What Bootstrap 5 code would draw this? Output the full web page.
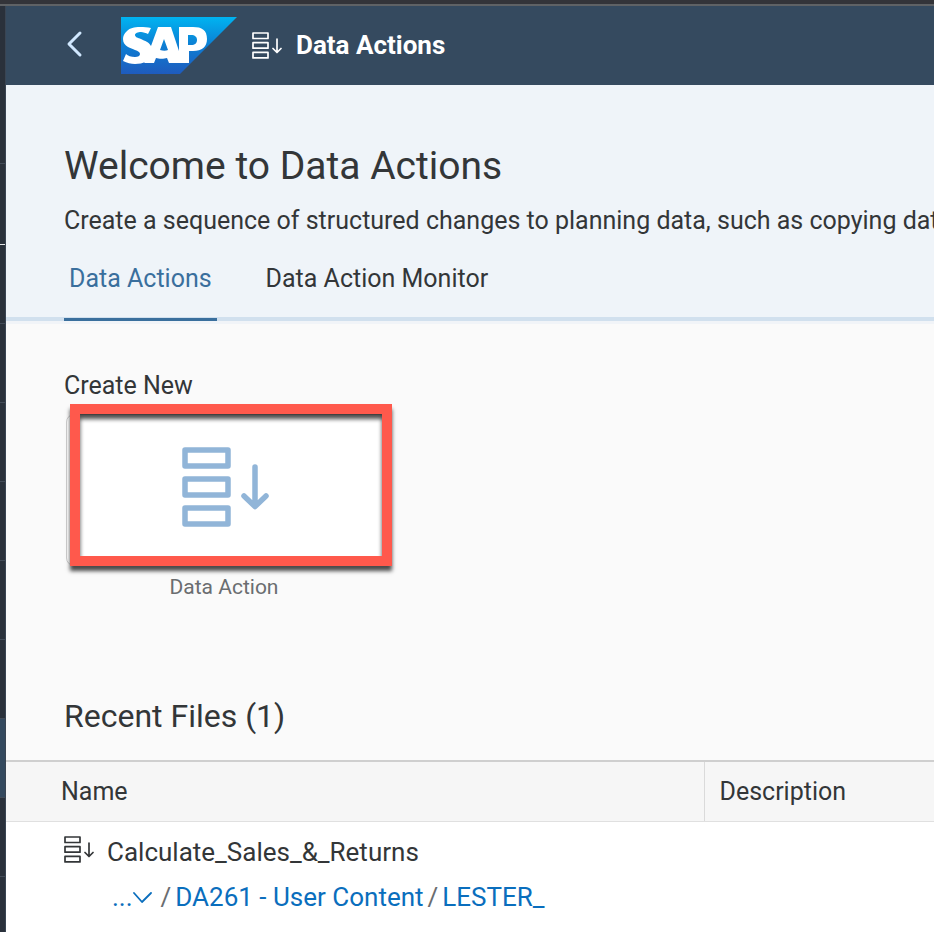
<!DOCTYPE html>
<html lang="en">
<head>
<meta charset="utf-8">
<meta name="viewport" content="width=device-width, initial-scale=1">
<title>Data Actions</title>
<link href="https://cdn.jsdelivr.net/npm/bootstrap@5.3.0/dist/css/bootstrap.min.css" rel="stylesheet">
<style>
  body { font-family: Roboto, "Noto Sans", sans-serif; font-size: 25px; line-height: 32px; color: #333638; background: #fafafa; }
  a { text-decoration: none; }
  .top-strip { height: 6px; background: #333439; border-bottom: 2px solid #5f6265; }
  .side-rail { width: 6px; background: #2a313b; border-right: 1px solid #3a4553; }
  .rail-link { height: 79px; border-bottom: 1px solid #434c58; }
  .rail-link:first-child { border-color: #2a313b; }
  .rail-link.marked { height: 81px; border-color: #e4e6e8; }
  .rail-link.active { background: #34495e; }
  .shell { height: 79px; background: #354a5f; color: #fff; padding-left: 58px; }
  .back-btn { width: 22px; color: #d1e8ff; margin-right: 35px; padding: 0 0 3px; }
  .brand-link { margin-right: 15px; }
  .app-title { font-size: 26px; line-height: 32px; margin-left: 14px; padding-bottom: 2px; }
  .glyph { fill: none; stroke: currentColor; stroke-linecap: round; stroke-linejoin: round; }
  .hero { background: #eff4f9; padding: 59px 0 0 58px; border-bottom: 3px solid #f1f4f8; }
  .hero-title { font-size: 39px; line-height: 44px; }
  .hero-text { margin-top: 17px; }
  .tab-row { margin: 18px 0 0 -58px; padding-left: 58px; border-bottom: 4px solid #d1e0ee; gap: 44px; }
  .tab-row .nav-link { color: #333638; padding: 8px 5px 23px; margin-bottom: -4px; border-bottom: 3px solid transparent; }
  .tab-row .nav-link.active { color: #3a6f9d; border-color: #3a6f9d; }
  .create { padding: 46px 58px 0; }
  .create-title { font-size: 25px; line-height: 32px; }
  .tile { width: 322px; height: 152px; margin: 12px 0 0 2px; background: #fff; border: 1px solid #cdcdcd; border-radius: 8px; color: #91b5d8; padding: 0 2px 6px 0; position: relative; }
  .callout { position: absolute; inset: -11px -5px -1px 3px; border: 10px solid #ff594c; box-shadow: 0 5px 4px rgba(0,0,0,.7), inset 0 5px 4px rgba(0,0,0,.7); }
  .tile-name { width: 320px; font-size: 21px; line-height: 28px; color: #6a6d70; margin-top: 7px; }
  .recent-title { font-size: 32px; line-height: 40px; padding: 0 58px; margin-top: 95px; }
  .files { margin-top: 24px; background: #fff; border-top: 2px solid #cfcfcf; table-layout: fixed; }
  .files th { background: #f6f6f6; font-weight: 400; padding: 14px 15px 13px; border-bottom: 1px solid #e0e0e0; }
  .files th:first-child { width: 698px; padding-left: 55px; border-right: 1px solid #dadada; }
  .files td { padding: 14px 15px 40px 58px; font-size: 26px; }
  .file-link { color: #333638; gap: 13px; }
  .crumbs { margin: 13px 0 0 48px; color: #6a6d70; gap: 4px; }
  .crumbs a { color: #0a6ebd; }
  .crumbs .more-link { margin-right: 4px; }
</style>
</head>
<body>
<svg class="d-none" aria-hidden="true">
  <symbol id="ic-step" viewBox="0 0 30 28">
    <rect x="1" y="1" width="15" height="5.500"/><rect x="1" y="10.700" width="15" height="5.500"/><rect x="1" y="20.400" width="15" height="5.500"/>
    <path d="M25 7v13M21 16.500l4 4 4-4"/>
  </symbol>
</svg>
<div class="min-vh-100 d-flex flex-column overflow-hidden">
  <div class="top-strip"></div>
  <div class="d-flex flex-fill">
    <nav class="side-rail flex-shrink-0 vh-100 overflow-hidden" aria-label="Main">
      <div class="rail-link"></div><div class="rail-link"></div><div class="rail-link marked"></div><div class="rail-link"></div>
      <div class="rail-link"></div><div class="rail-link"></div><div class="rail-link"></div><div class="rail-link"></div>
      <div class="rail-link"></div><div class="rail-link active"></div><div class="rail-link"></div><div class="rail-link"></div>
    </nav>
    <div class="flex-fill overflow-hidden">
      <header class="shell d-flex align-items-center">
        <button class="back-btn btn border-0 d-flex" type="button" aria-label="Back">
          <svg class="glyph" width="20" height="28" viewBox="0 0 20 28" stroke-width="3"><path d="M16 3L5 14l11 11"/></svg>
        </button>
        <a class="brand-link d-flex" href="#" aria-label="SAP home">
          <svg width="116" height="58" viewBox="0 0 116 58">
            <defs><linearGradient id="sapg" x2="0" y2="1"><stop offset="0" stop-color="#00b4f1"/><stop offset=".5" stop-color="#0d7ed3"/><stop offset="1" stop-color="#1f5bbd"/></linearGradient></defs>
            <path fill="url(#sapg)" d="M0 0h116L59 57H0z"/>
            <path fill="#fff" fill-rule="evenodd" d="M58 10v24L50 10H37l-7 19c-2-4-6-5-10-7-3-1-6-2-6-4s3-3 6-3c2 0 5 1 7 2l3-6c-3-1-7-1-11-1-6 0-10 1-13 4-3 3-4 5-4 8 0 4 2 6 5 8 2 1 5 2 7 3 3 1 5 2 5 4s-2 3-5 3c-4 0-7-1-9-3l-3 7c4 2 8 3 12 3 4 0 8-1 10-2l-1 1h10l2-5c3 1 8 1 11 0l2 5h20V34h4c9 0 14-4 14-12 0-9-5-12-14-12zM39 33l4-11 4 11c-2 1-5 1-8 0zM67 18h3c4 0 6 2 6 5s-2 5-6 5h-3z"/>
          </svg>
        </a>
        <svg class="glyph" width="30" height="28" stroke-width="1.700"><use href="#ic-step"/></svg>
        <h1 class="app-title fw-bold mb-0">Data Actions</h1>
      </header>
      <main>
        <section class="hero">
          <h2 class="hero-title fw-normal mb-0">Welcome to Data Actions</h2>
          <p class="hero-text text-nowrap overflow-hidden mb-0">Create a sequence of structured changes to planning data, such as copying data</p>
          <nav class="tab-row nav flex-nowrap text-nowrap">
            <a class="nav-link active" href="#" aria-current="page">Data Actions</a>
            <a class="nav-link" href="#">Data Action Monitor</a>
          </nav>
        </section>
        <section class="create">
          <h3 class="create-title fw-normal mb-0">Create New</h3>
          <button class="tile d-flex align-items-center justify-content-center" type="button" aria-labelledby="tile-name">
            <svg class="glyph" width="88" height="80" viewBox="0 0 88 80" stroke-width="5.500">
              <rect x="3" y="3" width="43" height="16"/><rect x="3" y="32" width="43" height="16"/><rect x="3" y="61" width="43" height="16"/>
              <path d="M73 20v39M62 49l11 10.500 11-10.500"/>
            </svg>
            <span class="callout"></span>
          </button>
          <div class="tile-name text-center" id="tile-name">Data Action</div>
        </section>
        <h3 class="recent-title fw-normal mb-0">Recent Files (1)</h3>
        <table class="files w-100">
          <thead><tr><th scope="col">Name</th><th scope="col">Description</th></tr></thead>
          <tbody><tr>
            <td>
              <a class="file-link d-flex" href="#"><svg class="glyph" width="30" height="28" stroke-width="1.700"><use href="#ic-step"/></svg>Calculate_Sales_&amp;_Returns</a>
              <div class="crumbs d-flex text-nowrap"><a class="more-link" href="#" aria-label="More locations">...<svg class="glyph" width="20" height="16" viewBox="0 0 20 16" stroke-width="1.800"><path d="M1 2l8 9 9-9"/></svg></a><span>/</span><a href="#">DA261 - User Content</a><span>/</span><a href="#">LESTER_</a></div>
            </td>
            <td></td>
          </tr></tbody>
        </table>
      </main>
    </div>
  </div>
</div>
<script src="https://cdn.jsdelivr.net/npm/bootstrap@5.3.0/dist/js/bootstrap.bundle.min.js"></script>
</body>
</html>
